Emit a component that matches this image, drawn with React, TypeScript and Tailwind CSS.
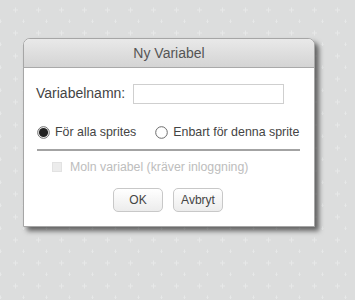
import React from 'react';

// dotted "+" backdrop like the Scratch stage editor
function PlusGrid() {
  return (
    <svg className="absolute inset-0 h-full w-full" aria-hidden>
      <defs>
        <pattern id="plus" width="23" height="23" patternUnits="userSpaceOnUse" x="1" y="0">
          <path d="M12 10h5M14.5 7.5v5" stroke="#e7e8e8" strokeWidth="1" />
          <path d="M0.5 21.5h-2M-0.5 19.5v4" stroke="#e7e8e8" strokeWidth="1" />
          <path d="M23.5 21.5h-2M22.5 19.5v4" stroke="#e7e8e8" strokeWidth="1" />
        </pattern>
      </defs>
      <rect width="100%" height="100%" fill="url(#plus)" />
    </svg>
  );
}

function Radio({ checked }: { checked?: boolean }) {
  return (
    <svg width="13" height="13" viewBox="0 0 13 13" className="shrink-0">
      <circle cx="6.5" cy="6.5" r="5.8" fill="#fff" stroke="#6b6b6b" strokeWidth="1" />
      {checked && <circle cx="6.5" cy="6.5" r="4.6" fill="#222" />}
    </svg>
  );
}

export default function App() {
  return (
    <div
      className="relative h-[300px] w-[355px] overflow-hidden bg-[#dcdddd]"
      style={{ fontFamily: '"Liberation Sans", Arial, sans-serif' }}
    >
      <PlusGrid />
      <div className="relative ml-[23px] mt-[38px] w-[292px] rounded-t-[7px] border border-[#a6a6a6] bg-white shadow-[4px_4px_5px_rgba(0,0,0,0.55)]">
        <div className="flex h-[29px] items-center justify-center rounded-t-[6px] border-b border-[#a9a9a9] bg-gradient-to-b from-[#e9e9e9] to-[#d4d4d4] text-[14px] text-[#555]">
          Ny Variabel
        </div>

        <div className="px-[12px] pb-[14px] pt-[15px]">
          <div className="flex items-center gap-[8px] text-[14px] text-[#444]">
            <span>Variabelnamn:</span>
            <div className="h-[20px] w-[151px] border border-[#cfcfcf] bg-white" />
          </div>

          <div className="mt-[20px] flex h-[16px] items-center pl-[1px] text-[12.4px] text-[#444]">
            <Radio checked />
            <span className="ml-[5px]">För alla sprites</span>
            <span className="ml-[19px]">
              <Radio />
            </span>
            <span className="ml-[5px]">Enbart för denna sprite</span>
          </div>

          <div className="ml-[1px] mt-[9px] h-[2px] w-[263px] bg-[#a3a3a3]" />

          <div className="mt-[9px] flex h-[14px] items-center pl-[16px] text-[12.3px] text-[#bdbdbd]">
            <div className="h-[10px] w-[10px] border border-[#e2e2e2] bg-[#ececec]" />
            <span className="ml-[8px]">Moln variabel (kräver inloggning)</span>
          </div>

          <div className="mt-[14px] flex justify-center gap-[10px] pr-[2px] text-[12px] text-[#444]">
            <button className="flex h-[24px] w-[50px] items-center justify-center rounded-[5px] border border-[#c8c8c8] bg-gradient-to-b from-white to-[#ececec]">
              OK
            </button>
            <button className="flex h-[24px] w-[50px] items-center justify-center rounded-[5px] border border-[#c8c8c8] bg-gradient-to-b from-white to-[#ececec]">
              Avbryt
            </button>
          </div>
        </div>
      </div>
    </div>
  );
}
